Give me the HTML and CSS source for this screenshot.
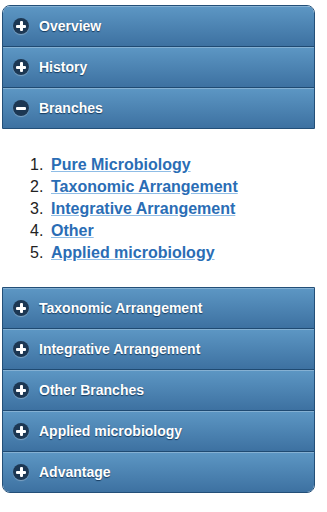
FILE: index.html
```html
<!DOCTYPE html>
<html lang="en">
<head>
  <meta charset="UTF-8" />
  <title>Microbiology</title>
  <meta name="viewport" content="width=device-width, initial-scale=1.0" />
  <link rel="stylesheet" href="styles.css">
</head>
<body>

  <!-- TOP SET -->
  <div class="set set-top">
    <div class="head"><span class="icon plus"></span>Overview</div>
    <div class="head"><span class="icon plus"></span>History</div>
    <div class="head"><span class="icon minus"></span>Branches</div>
  </div>

  <div class="content">
    <ol>
      <li><a href="#">Pure Microbiology</a></li>
      <li><a href="#">Taxonomic Arrangement</a></li>
      <li><a href="#">Integrative Arrangement</a></li>
      <li><a href="#">Other</a></li>
      <li><a href="#">Applied microbiology</a></li>
    </ol>
  </div>

  <!-- BOTTOM SET -->
  <div class="set set-bottom">
    <div class="head"><span class="icon plus"></span>Taxonomic Arrangement</div>
    <div class="head"><span class="icon plus"></span>Integrative Arrangement</div>
    <div class="head"><span class="icon plus"></span>Other Branches</div>
    <div class="head"><span class="icon plus"></span>Applied microbiology</div>
    <div class="head"><span class="icon plus"></span>Advantage</div>
  </div>

</body>
</html>
```

FILE: styles.css
```css
body {
  margin: 0;
  padding: 5px 12px 0 2px;
  background: #fff;
  font-family: "Liberation Sans", Arial, sans-serif;
}
.set {
  border: 1px solid #234f78;
  overflow: hidden;
}
.set-top {
  border-radius: 8px 8px 0 0;
}
.set-bottom {
  border-radius: 0 0 8px 8px;
}
.head {
  display: flex;
  align-items: center;
  height: 40px;
  padding-left: 10px;
  background: linear-gradient(#5d97c4, #3d71a1);
  border-bottom: 1px solid #1f4a72;
  box-shadow: inset 0 1px 0 rgba(255, 255, 255, 0.25);
  color: #fff;
  font-size: 14px;
  font-weight: bold;
  text-shadow: 0 1px 1px #163a5e;
}
.head:last-child {
  border-bottom: 0;
}
.icon {
  position: relative;
  width: 16px;
  height: 16px;
  border-radius: 50%;
  background: #1c3753;
  box-shadow: 0 1px 1px rgba(255, 255, 255, 0.3);
  margin-right: 10px;
  flex-shrink: 0;
}
.icon::before,
.plus::after {
  content: "";
  position: absolute;
  background: #fff;
  border-radius: 1px;
}
.icon::before {
  left: 3px;
  top: 6.5px;
  width: 10px;
  height: 3px;
}
.plus::after {
  left: 6.5px;
  top: 3px;
  width: 3px;
  height: 10px;
}
.content {
  padding: 25px 0 23px 0;
}
ol {
  margin: 0;
  padding-left: 49px;
  font-size: 16px;
  line-height: 22px;
  color: #222;
}
li::marker {
  content: counter(list-item) ".\00a0\2009";
}
a {
  color: #2a6db5;
  text-decoration: underline;
  text-decoration-color: #8fbde6;
  font-weight: 600;
}
```
